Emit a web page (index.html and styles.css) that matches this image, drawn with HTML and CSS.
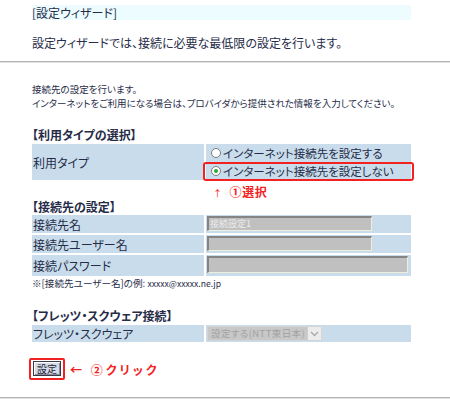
FILE: index.html
```html
<!DOCTYPE html>
<html lang="ja">
<head>
<meta charset="utf-8">
<title>設定ウィザード</title>
<link rel="stylesheet" href="styles.css">
</head>
<body>
<div class="page">
  <div class="wrap">
    <div class="title">[設定ウィザード]</div>
    <p class="lead">設定ウィザードでは、接続に必要な最低限の設定を行います。</p>
  </div>
  <div class="rule"></div>
  <div class="wrap">
    <p class="intro">接続先の設定を行います。<br>インターネットをご利用になる場合は、プロバイダから提供された情報を入力してください。</p>

    <h2 class="sec sec-first">【利用タイプの選択】</h2>
    <div class="grid">
      <div class="lab lab-tall">利用タイプ</div>
      <div class="val radios">
        <div class="radio-line"><span class="radio"></span>インターネット接続先を設定する</div>
        <div class="radio-line marked"><span class="radio on"></span>インターネット接続先を設定しない</div>
      </div>
    </div>
    <div class="pick"><span class="arrow-up">↑</span>①選択</div>

    <h2 class="sec">【接続先の設定】</h2>
    <div class="grid">
      <div class="lab row-a">接続先名</div>
      <div class="val row-a"><div class="field f-short">接続設定1</div></div>
      <div class="lab row-a">接続先ユーザー名</div>
      <div class="val row-a"><div class="field f-short"></div></div>
      <div class="lab row-b">接続パスワード</div>
      <div class="val row-b"><div class="field f-long"></div></div>
    </div>
    <p class="note">※[接続先ユーザー名]の例: <span class="ex">xxxxx@xxxxx.ne.jp</span></p>

    <h2 class="sec sec-third">【フレッツ・スクウェア接続】</h2>
    <div class="grid">
      <div class="lab row-c">フレッツ・スクウェア</div>
      <div class="val row-c">
        <div class="select">
          <span class="sel-text">設定する(NTT東日本)</span>
          <span class="sel-btn"><svg width="9" height="6" viewBox="0 0 9 6"><path d="M1 1 L4.5 4.5 L8 1" fill="none" stroke="#a8a8a8" stroke-width="1.3"/></svg></span>
        </div>
      </div>
    </div>

    <div class="action">
      <span class="btn-mark"><span class="btn">設定</span></span>
      <span class="click">← ②クリック</span>
    </div>
  </div>
  <div class="rule rule-bottom"></div>
</div>
</body>
</html>
```

FILE: styles.css
```css
* { box-sizing: border-box; }

html, body {
  margin: 0;
  padding: 0;
  background: #ffffff;
}

body {
  font-family: "Noto Sans CJK JP", "Noto Sans", sans-serif;
  font-feature-settings: "palt";
  color: #262c48;
  width: 450px;
  height: 405px;
  overflow: hidden;
}

.wrap {
  width: 379px;
  margin-left: 32px;
}

.title {
  margin-top: 5px;
  height: 15px;
  line-height: 15px;
  font-size: 12px;
  background: #edfcff;
}

.lead {
  margin: 15px 0 0;
  height: 16px;
  line-height: 16px;
  font-size: 12px;
}

.rule {
  margin-top: 10px;
  height: 2px;
  border-top: 1px solid #b4b4b4;
  border-bottom: 1px solid #e2e2e2;
}

.intro {
  margin: 19px 0 0;
  font-size: 9.5px;
  line-height: 14px;
}

.sec {
  margin: 20px 0 0;
  font-size: 12px;
  line-height: 16px;
  height: 16px;
  font-weight: bold;
}

.sec-first { margin-top: 17px; }
.sec-third { margin-top: 19px; }

.grid {
  margin-top: 1px;
  display: grid;
  grid-template-columns: 172px 205px;
  column-gap: 2px;
  row-gap: 2px;
}

.lab,
.val {
  background: #c9dceb;
  font-size: 12px;
}

.lab {
  display: flex;
  align-items: center;
  padding-left: 1px;
}

.lab-tall {
  height: 36px;
}

.radios {
  display: flex;
  flex-direction: column;
}

.radio-line {
  position: relative;
  height: 18px;
  display: flex;
  align-items: center;
  padding-left: 5px;
  font-size: 11.5px;
}

.radio-line.marked::after {
  content: "";
  position: absolute;
  left: -3px;
  right: -3px;
  top: 0;
  bottom: -1px;
  border: 2px solid #f22222;
  border-radius: 3px;
}

.radio {
  width: 10px;
  height: 10px;
  border: 1px solid #7c7c7c;
  border-radius: 50%;
  background: #ffffff;
  margin-right: 2px;
  display: inline-flex;
  align-items: center;
  justify-content: center;
  flex: none;
}

.radio.on::before {
  content: "";
  width: 4px;
  height: 4px;
  border-radius: 50%;
  background: #2ea82e;
}

.pick {
  margin-top: 5px;
  height: 14px;
  line-height: 14px;
  padding-left: 181px;
  color: #f22222;
  font-weight: bold;
  font-size: 12px;
  letter-spacing: 0.6px;
}

.arrow-up {
  font-size: 9px;
  font-weight: normal;
  margin-right: 7px;
}

.pick + .sec { margin-top: 0; height: 15px; line-height: 15px; }

.row-a { height: 18px; }
.row-b { height: 21px; }
.row-c { height: 17px; }

.val.row-a,
.val.row-b,
.val.row-c {
  padding-left: 1px;
  padding-top: 1px;
}

.field {
  background: #c0c0c0;
  border-top: 2px solid #848484;
  border-left: 2px solid #848484;
  border-bottom: 1px solid #eeeedd;
  border-right: 1px solid #eeeedd;
  font-size: 9px;
  line-height: 12px;
  color: #ececec;
  padding-left: 1px;
}

.f-short { width: 165px; height: 15px; }
.f-long { width: 201px; height: 17px; }

.note {
  margin: 2px 0 0;
  height: 11px;
  line-height: 11px;
  font-size: 9.6px;
}

.ex {
  font-size: 8.6px;
}

.select {
  width: 115px;
  height: 15px;
  display: flex;
  background: #c8c8c8;
  border: 1px solid #d4d4d4;
}

.sel-text {
  flex: 1;
  font-size: 9.5px;
  line-height: 13px;
  color: #a2a2a2;
  padding-left: 3px;
  letter-spacing: 0.4px;
}

.sel-btn {
  width: 14px;
  background: #ececec;
  border-left: 1px solid #d0d0d0;
  display: flex;
  align-items: center;
  justify-content: center;
}

.action {
  margin-top: 16px;
  margin-left: -3px;
  display: flex;
  align-items: center;
  height: 22px;
}

.btn-mark {
  display: inline-flex;
  border: 2px solid #f22222;
  border-radius: 2px;
  padding: 1px 2px 2px 2px;
}

.btn {
  display: inline-flex;
  align-items: center;
  justify-content: center;
  width: 28px;
  height: 15px;
  background: #d6dbe8;
  border: 1px solid #3a3a4a;
  box-shadow: inset 1px 1px 0 #ffffff, inset -1px -1px 0 #8a8a9a;
  font-size: 10px;
  color: #222233;
}

.click {
  margin-left: 5px;
  color: #f22222;
  font-weight: bold;
  font-size: 12px;
  letter-spacing: 3px;
}

.rule-bottom {
  margin-top: 17px;
}
```
